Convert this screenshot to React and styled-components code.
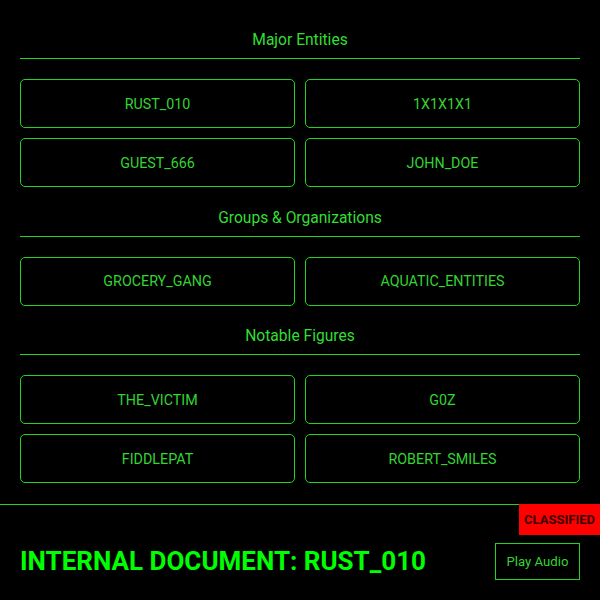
import React from "react";
import styled, { createGlobalStyle } from "styled-components";

const GlobalStyle = createGlobalStyle`
  html, body {
    margin: 0;
    padding: 0;
    background: #000;
  }
  body {
    font-family: Roboto, "Liberation Sans", Arial, sans-serif;
    color: #33cc33;
  }
  * { box-sizing: border-box; }
`;

const Page = styled.div`
  width: 600px;
  height: 600px;
  background: #000;
  display: flex;
  flex-direction: column;
  overflow: hidden;
`;

const Directory = styled.main`
  flex: 1;
  display: flex;
  flex-direction: column;
  gap: 21.5px;
  padding: 31px 20px 0;
`;

const Section = styled.section`
  display: flex;
  flex-direction: column;
  gap: 20px;
`;

const SectionTitle = styled.h2`
  margin: 0;
  padding-bottom: 8px;
  border-bottom: 1px solid #22d422;
  font-size: 15.6px;
  line-height: 19px;
  font-weight: 400;
  text-align: center;
  color: #33dd33;
`;

const EntityGrid = styled.div`
  display: grid;
  grid-template-columns: 1fr 1fr;
  gap: 10px;
`;

const EntityButton = styled.button`
  height: 49px;
  background: transparent;
  border: 1px solid #22d422;
  border-radius: 5px;
  color: #33d433;
  font-family: inherit;
  font-size: 14.3px;
  cursor: pointer;
`;

const Footer = styled.footer`
  position: relative;
  height: 96px;
  border-top: 1px solid #22d422;
  padding: 37px 20px 20px;
  display: flex;
  align-items: center;
  justify-content: space-between;
`;

const Badge = styled.div`
  position: absolute;
  top: -1px;
  right: 0;
  width: 81px;
  height: 31px;
  background: #ff0000;
  color: #3a0000;
  font-size: 13px;
  font-weight: 700;
  display: flex;
  align-items: center;
  justify-content: center;
`;

const DocTitle = styled.h1`
  margin: 0;
  font-size: 26px;
  font-weight: 700;
  color: #00ff00;
  letter-spacing: 0;
`;

const AudioButton = styled.button`
  width: 85px;
  height: 37px;
  background: transparent;
  border: 1px solid #22d422;
  color: #33d433;
  font-family: inherit;
  font-size: 13.2px;
  padding: 0;
  cursor: pointer;
`;

const sections = [
  {
    title: "Major Entities",
    items: ["RUST_010", "1X1X1X1", "GUEST_666", "JOHN_DOE"],
  },
  {
    title: "Groups & Organizations",
    items: ["GROCERY_GANG", "AQUATIC_ENTITIES"],
  },
  {
    title: "Notable Figures",
    items: ["THE_VICTIM", "G0Z", "FIDDLEPAT", "ROBERT_SMILES"],
  },
];

export default function App() {
  return (
    <>
      <GlobalStyle />
      <Page>
        <Directory>
          {sections.map((s) => (
            <Section key={s.title}>
              <SectionTitle>{s.title}</SectionTitle>
              <EntityGrid>
                {s.items.map((name) => (
                  <EntityButton key={name}>{name}</EntityButton>
                ))}
              </EntityGrid>
            </Section>
          ))}
        </Directory>
        <Footer>
          <Badge>CLASSIFIED</Badge>
          <DocTitle>INTERNAL DOCUMENT: RUST_010</DocTitle>
          <AudioButton>Play Audio</AudioButton>
        </Footer>
      </Page>
    </>
  );
}
